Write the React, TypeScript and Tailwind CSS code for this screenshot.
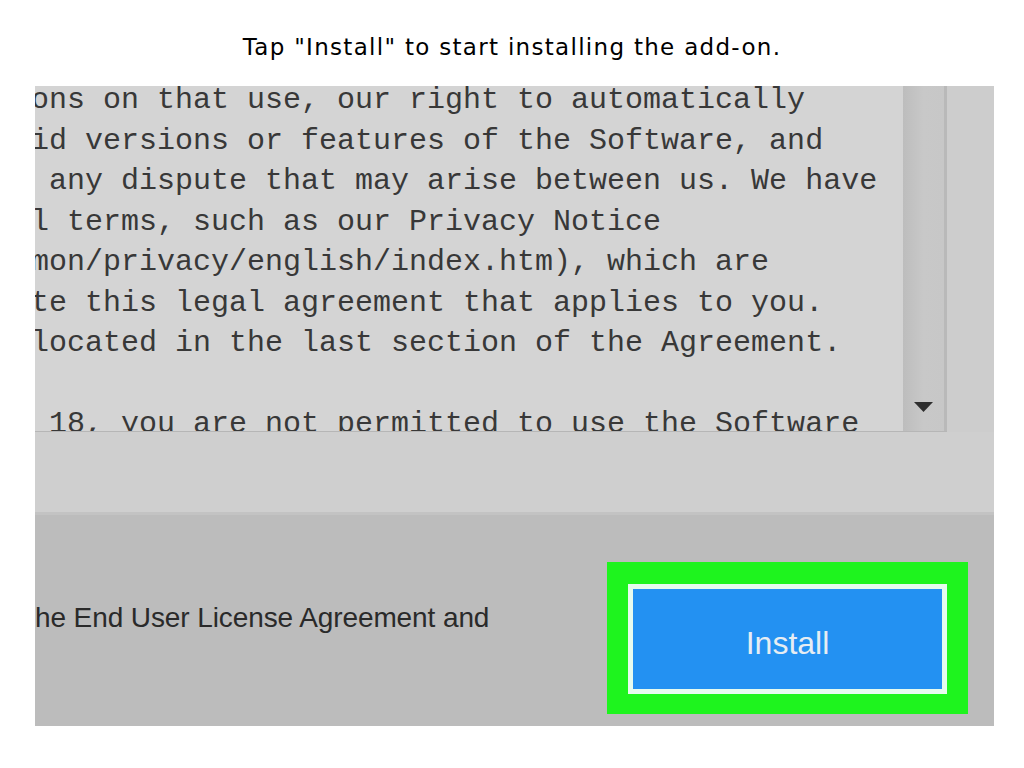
import React from "react";

const lines = [
  "ons on that use, our right to automatically",
  "id versions or features of the Software, and",
  " any dispute that may arise between us. We have",
  "l terms, such as our Privacy Notice",
  "mon/privacy/english/index.htm), which are",
  "te this legal agreement that applies to you.",
  "located in the last section of the Agreement.",
  " ",
  " 18, you are not permitted to use the Software",
];

export default function App() {
  return (
    <div className="w-[1024px] h-[768px] bg-white overflow-hidden">
      <div
        className="h-[86px] pt-[34px] text-center text-[23px] leading-[26px] tracking-[1.3px] text-black"
        style={{ fontFamily: '"DejaVu Sans", Verdana, sans-serif' }}
      >
        Tap "Install" to start installing the add-on.
      </div>

      <div className="ml-[35px] w-[959px] h-[640px] overflow-hidden flex flex-col">
        {/* top: text area + scrollbar */}
        <div className="h-[346px] flex shrink-0">
          <div className="flex-1 flex border-b border-[#b6b6b6]">
            <div className="flex-1 bg-[#d4d4d4] overflow-hidden">
              <div
                className="-ml-[4px] -mt-[6px] text-[30px] leading-[40.5px] whitespace-pre text-[#383838]"
                style={{ fontFamily: '"Liberation Mono", "Courier New", monospace' }}
              >
                {lines.map((l, i) => (
                  <div key={i}>{l}</div>
                ))}
              </div>
            </div>
            <div className="w-[44px] flex flex-col justify-end items-center pb-[19px] bg-gradient-to-r from-[#bdbdbd] via-[#c8c8c8] to-[#c7c7c7] border-r-[3px] border-[#b9b9b9]">
              <svg width="19" height="10" viewBox="0 0 19 10">
                <polygon points="0,0 19,0 9.5,10" fill="#2f2f2f" />
              </svg>
            </div>
          </div>
          <div className="w-[47px] bg-[#cdcdcd]" />
        </div>

        {/* middle gray band */}
        <div className="h-[80px] shrink-0 bg-[#cfcfcf]" />

        {/* bottom bar */}
        <div className="flex-1 flex items-start bg-[#bcbcbc] border-t-[3px] border-[#c3c3c3]">
          <div
            className="mt-[87px] text-[28px] leading-[32px] tracking-[-0.1px] whitespace-nowrap text-[#2a2a2a]"
            style={{ fontFamily: '"Liberation Sans", Arial, sans-serif' }}
          >
            he End User License Agreement and
          </div>
          <div className="ml-auto mr-[26px] mt-[47px] bg-[#1ef41e] pt-[22px] pb-[20px] px-[21px]">
            <div className="w-[319px] h-[110px] border-[5px] border-[#e6fbef] bg-[#2391f2] flex items-center justify-center pt-[7px]">
              <span
                className="text-[32px] leading-[36px] text-[#e6edf3]"
                style={{ fontFamily: '"Liberation Sans", Arial, sans-serif' }}
              >
                Install
              </span>
            </div>
          </div>
        </div>
      </div>
    </div>
  );
}
